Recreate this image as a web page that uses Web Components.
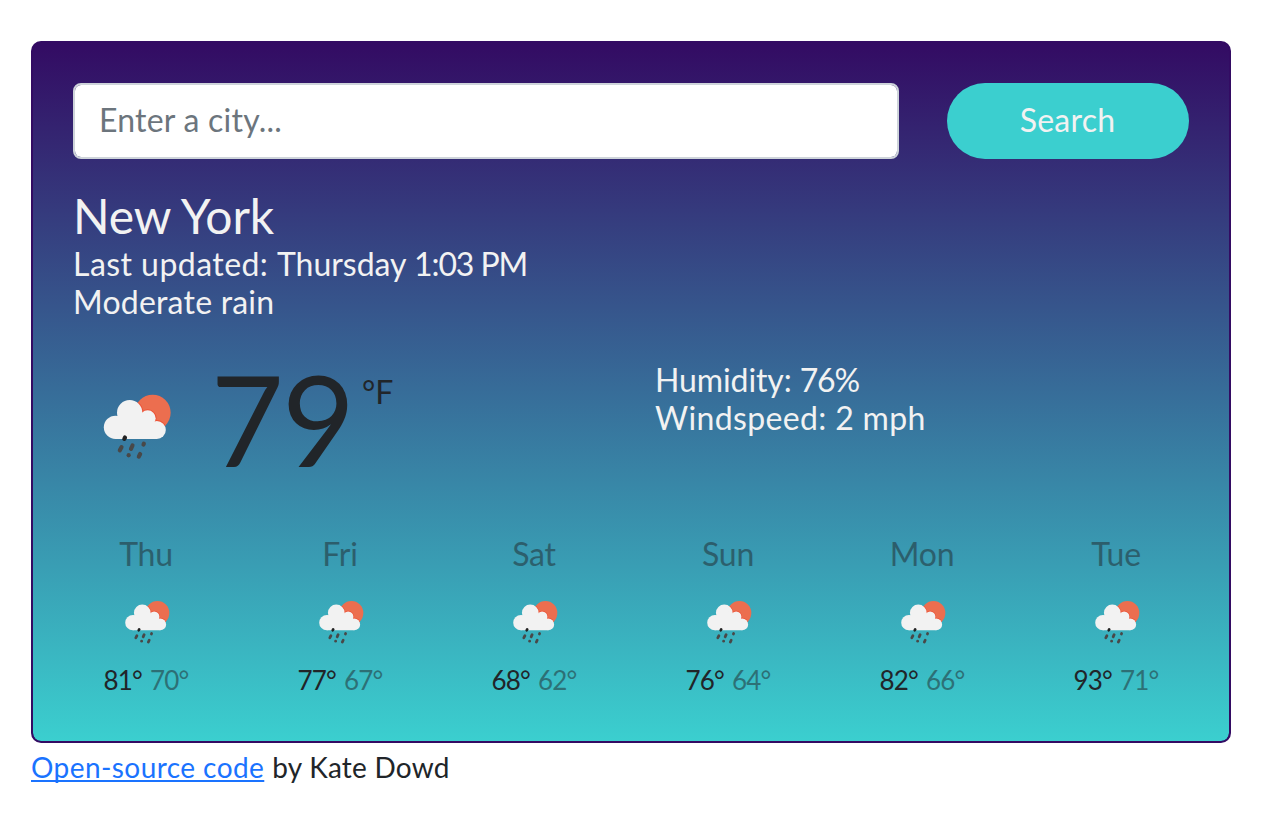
<!DOCTYPE html>
<html lang="en">
<head>
<meta charset="utf-8">
<title>Weather</title>
<style>
  body { margin: 0; padding: 41px 39px 0 31px; background: #fff; color: #212529; font-family: Lato, "Open Sans", sans-serif; }
</style>
</head>
<body>
<weather-app></weather-app>
<script>
class Base extends HTMLElement {
  constructor() {
    super();
    this.attachShadow({ mode: 'open' });
  }
  connectedCallback() {
    this.shadowRoot.innerHTML = '<style>*{box-sizing:border-box}' + this.css() + '</style>' + this.html();
  }
}

customElements.define('rain-icon', class extends Base {
  css() { return ':host{display:block} svg{display:block;width:100%;height:100%}'; }
  html() {
    return `<svg viewBox="65 130 212 200" aria-hidden="true">
      <defs>
        <g id="cloud">
          <circle cx="105.500" cy="233" r="35"/><circle cx="148" cy="189" r="38"/>
          <circle cx="202" cy="206" r="24"/><circle cx="229.500" cy="241" r="27"/>
          <path d="M105 200H148V175L205 200L230 225V268H105Z"/>
        </g>
        <clipPath id="sun"><circle cx="217" cy="189" r="54"/></clipPath>
      </defs>
      <circle cx="217" cy="189" r="54" fill="#ec6e4f"/>
      <use href="#cloud" clip-path="url(#sun)" fill="none" stroke="#ec5236" stroke-width="6"/>
      <use href="#cloud" fill="#f2f2f2"/>
      <g stroke="#484848" stroke-width="12.500" stroke-linecap="round">
        <path d="M123.500 292.500L118.500 302"/><path d="M156.500 287.500L152 297.500"/>
        <path d="M190.500 282L189.500 284.500"/><path d="M145 316.500L145 317"/>
        <path d="M179.500 313L175.500 321"/><path d="M134 263.500L132 267.500" stroke="#222"/>
      </g>
    </svg>`;
  }
});

customElements.define('city-search', class extends Base {
  css() {
    return `:host{display:block}
    form{display:flex;gap:48px;height:76px;margin:0}
    input,button{font:32px/38px Lato,"Open Sans",sans-serif;height:76px;margin:0}
    input{flex:1;min-width:0;border:2px solid #ced4da;border-radius:8px;background:#fff;background-clip:padding-box;padding:0 24px 3px;letter-spacing:.23px;color:#212529;outline:0}
    input::placeholder{color:#6c757d;opacity:1}
    button{width:242px;border:0;border-radius:38px;background:#3bcfcf;color:#f2f2f2;letter-spacing:.2px;padding:0 1px 2px 0}`;
  }
  html() { return '<form onsubmit="return false"><input type="text" placeholder="Enter a city..."><button type="submit">Search</button></form>'; }
});

customElements.define('city-overview', class extends Base {
  css() {
    return `:host{display:block;margin-top:32px;color:#f2f2f2;font-size:32px;line-height:38px}
    h1{margin:0 0 4px;font-size:48px;font-weight:400;line-height:50px;letter-spacing:-.1px}
    .label{letter-spacing:.45px} .time{letter-spacing:-1.1px} .state{letter-spacing:.21px}`;
  }
  html() {
    return `<h1>New York</h1>
    <div><span class="label">Last updated: </span>Thursday <span class="time">1:03 PM</span></div>
    <div class="state">Moderate rain</div>`;
  }
});

customElements.define('current-conditions', class extends Base {
  css() {
    return `:host{display:grid;grid-template-columns:582px 1fr;height:214px;padding-top:40px;font-size:32px;line-height:38px}
    .now{display:flex;align-items:flex-start}
    rain-icon{width:70.67px;height:66.67px;margin:32.33px 0 0 28.67px}
    .temp{margin:0 0 0 38.5px;font-size:126px;line-height:116px;letter-spacing:-2px}
    .unit{margin:12px 0 0 9px;letter-spacing:0;font-kerning:none}
    .facts{color:#f2f2f2} .hum{letter-spacing:-.1px} .hum span{letter-spacing:-1.2px} .wind{letter-spacing:.36px}`;
  }
  html() {
    return `<div class="now"><rain-icon></rain-icon><div class="temp">79</div><div class="unit">°F</div></div>
    <div class="facts"><div class="hum">Humidity: <span>76%</span></div><div class="wind">Windspeed: 2 mph</div></div>`;
  }
});

customElements.define('forecast-day', class extends Base {
  css() {
    return `:host{display:flex;flex-direction:column;align-items:center}
    .day{font-size:32px;line-height:38px;letter-spacing:-.2px;opacity:.5}
    rain-icon{width:46.67px;height:44px;margin:27px 0 17px 2px}
    .temps{display:flex;gap:8px;font-size:26px;line-height:38px;letter-spacing:-.83px}
    .min{opacity:.5}`;
  }
  html() {
    return `<div class="day">${this.getAttribute('day')}</div><rain-icon></rain-icon>
    <div class="temps"><span>${this.getAttribute('max')}°</span><span class="min">${this.getAttribute('min')}°</span></div>`;
  }
});

customElements.define('week-forecast', class extends Base {
  css() { return ':host{display:grid;grid-template-columns:repeat(6,194px);margin:0 -24px}'; }
  html() {
    return [['Thu', 81, 70], ['Fri', 77, 67], ['Sat', 68, 62], ['Sun', 76, 64], ['Mon', 82, 66], ['Tue', 93, 71]]
      .map(([d, a, b]) => `<forecast-day day="${d}" max="${a}" min="${b}"></forecast-day>`).join('');
  }
});

customElements.define('weather-card', class extends Base {
  css() { return ':host{display:block;box-sizing:border-box;height:702px;padding:40px;border:2px solid #330b63;border-radius:10px;background:linear-gradient(180deg,#330b63,#3bcfcf) padding-box,#330b63 border-box}'; }
  html() { return '<slot></slot>'; }
});

customElements.define('source-credit', class extends Base {
  css() {
    return `:host{display:block;margin-top:3px;font-size:28px;line-height:42px;white-space:nowrap}
    a{color:#1a73ff;letter-spacing:.43px;text-decoration:underline 2px;text-underline-offset:2px;text-decoration-skip-ink:none}
    span{letter-spacing:.23px;margin-left:8px}`;
  }
  html() { return '<a href="#">Open-source code</a><span>by Kate Dowd</span>'; }
});

customElements.define('weather-app', class extends Base {
  css() { return ':host{display:block;width:1200px}'; }
  html() {
    return `<weather-card><city-search></city-search><city-overview></city-overview>
      <current-conditions></current-conditions><week-forecast></week-forecast></weather-card>
      <source-credit></source-credit>`;
  }
});
</script>
</body>
</html>
